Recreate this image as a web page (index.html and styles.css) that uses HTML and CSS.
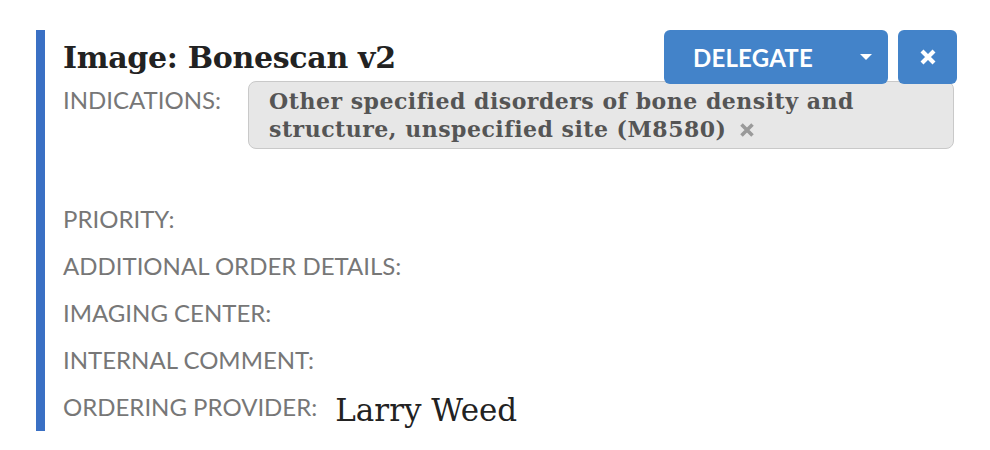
FILE: index.html
```html
<!DOCTYPE html>
<html lang="en">
<head>
<meta charset="utf-8">
<title>Order</title>
<link rel="stylesheet" href="styles.css">
</head>
<body>
<div class="order">
  <div class="head">
    <h2 class="title">Image: Bonescan v2</h2>
    <div class="actions">
      <button class="btn delegate"><span class="btn-text">DELEGATE</span><span class="caret"></span></button>
      <button class="btn close" aria-label="Close">
        <svg width="18" height="18" viewBox="0 0 18 18"><path d="M3 3 L15 15 M15 3 L3 15" stroke="#fff" stroke-width="4.2" stroke-linecap="butt"/></svg>
      </button>
    </div>
  </div>
  <div class="row indications">
    <div class="label">INDICATIONS:</div>
    <div class="pill">Other specified disorders of bone density and structure, unspecified site (M8580) <svg class="pill-x" width="16" height="16" viewBox="0 0 16 16"><path d="M2.5 2.5 L13.5 13.5 M13.5 2.5 L2.5 13.5" stroke="#9a9a9a" stroke-width="3.6"/></svg></div>
  </div>
  <div class="row first"><div class="label">PRIORITY:</div></div>
  <div class="row"><div class="label">ADDITIONAL ORDER DETAILS:</div></div>
  <div class="row"><div class="label">IMAGING CENTER:</div></div>
  <div class="row"><div class="label">INTERNAL COMMENT:</div></div>
  <div class="row"><div class="label">ORDERING PROVIDER:</div><div class="value">Larry Weed</div></div>
</div>
</body>
</html>
```
FILE: styles.css
```css
html, body {
  margin: 0;
  padding: 0;
  background: #fff;
}
.order {
  margin: 33px 33px 0 36px;
  border-left: 9px solid #3a70c4;
  padding: 0 0 1px 18px;
}
.head {
  display: flex;
  justify-content: space-between;
  align-items: center;
  height: 54px;
  margin-top: -3px;
}
.title {
  margin: 0;
  font-family: "DejaVu Serif", serif;
  font-weight: bold;
  font-size: 30px;
  color: #222;
  letter-spacing: -0.3px;
}
.actions {
  display: flex;
  gap: 10px;
  height: 54px;
  position: relative;
  z-index: 2;
}
.btn {
  border: none;
  background: #4383c9;
  color: #fff;
  border-radius: 6px;
  height: 54px;
  padding: 0;
  display: flex;
  align-items: center;
  cursor: pointer;
}
.delegate {
  width: 224px;
  padding-left: 29px;
}
.btn-text {
  font-family: Lato, sans-serif;
  font-weight: bold;
  font-size: 24px;
  letter-spacing: 0.2px;
}
.caret {
  margin-left: auto;
  margin-right: 16px;
  width: 0;
  height: 0;
  border-left: 6px solid transparent;
  border-right: 6px solid transparent;
  border-top: 6px solid #fff;
}
.close {
  width: 59px;
  justify-content: center;
}
.row {
  display: flex;
  align-items: flex-start;
  height: 47px;
}
.label {
  font-family: Lato, sans-serif;
  font-size: 24px;
  color: #777;
  line-height: 47px;
  margin-right: 18px;
}
.indications {
  height: auto;
  margin-top: -3px;
}
.indications .label {
  line-height: 28px;
  margin-top: 5px;
  margin-right: 27px;
}
.pill {
  flex: 1;
  margin-right: 3px;
  background: #e7e7e7;
  border: 1.5px solid #c9c9c9;
  border-radius: 8px;
  padding: 5px 20px 5px 20px;
  font-family: "DejaVu Serif", serif;
  font-weight: bold;
  font-size: 22px;
  line-height: 28px;
  color: #555;
  letter-spacing: 0.5px;
}
.pill-x {
  margin-left: 4px;
  vertical-align: -1px;
}
.first {
  margin-top: 46px;
}
.value {
  font-family: "DejaVu Serif", serif;
  font-size: 31px;
  line-height: 47px;
  color: #222;
  margin-top: 4px;
}
```
